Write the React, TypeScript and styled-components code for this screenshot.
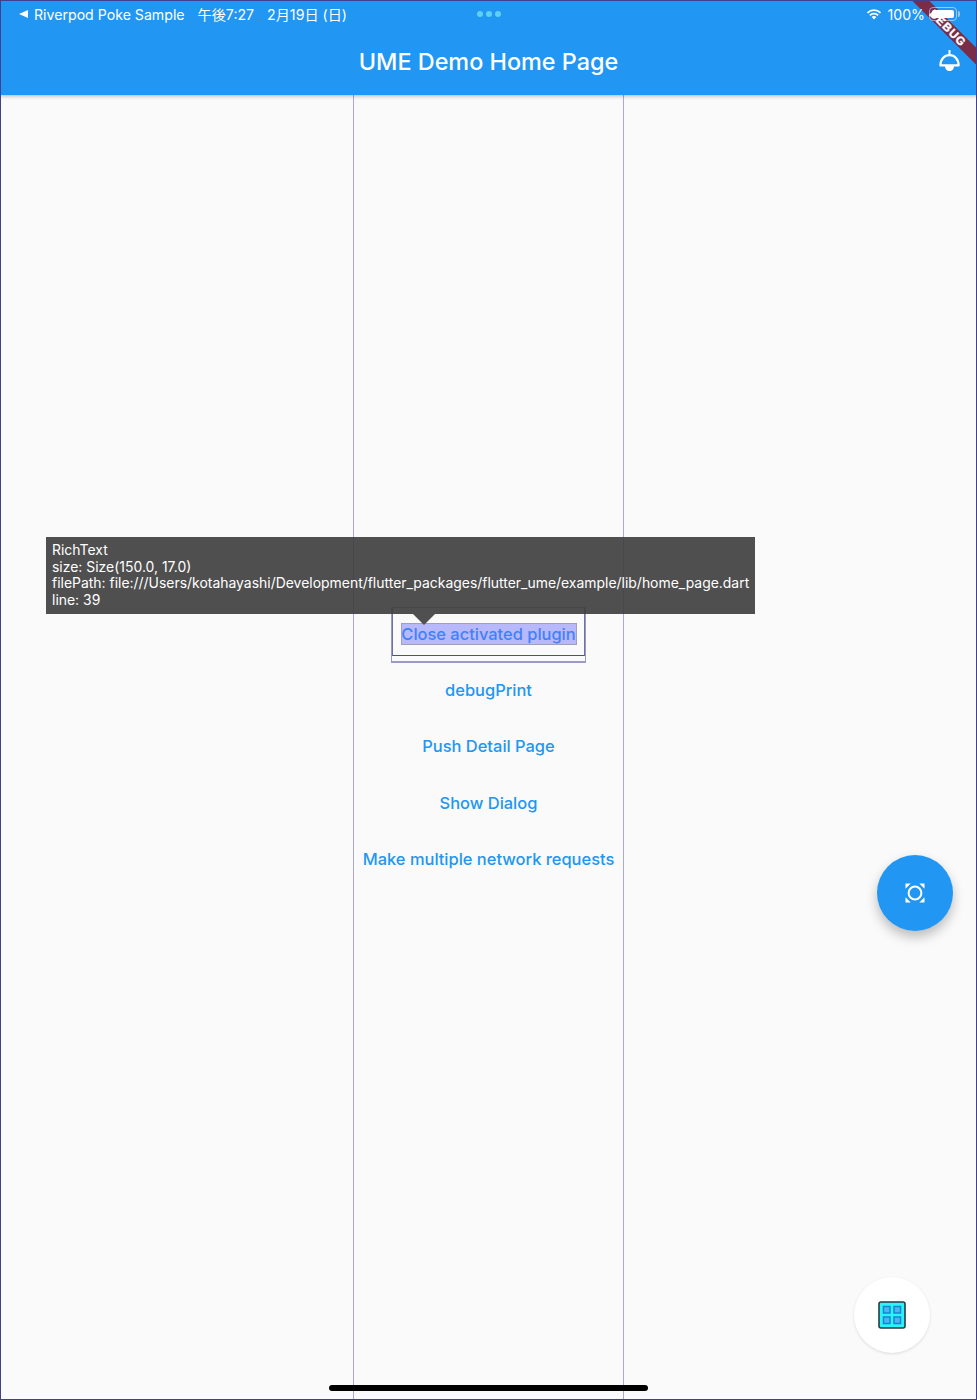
import React from 'react'
import styled, { createGlobalStyle } from 'styled-components'

const GlobalStyle = createGlobalStyle`
  html, body {
    margin: 0;
    padding: 0;
    background: #fafafa;
  }
`

const buttons = ['Close activated plugin', 'debugPrint', 'Push Detail Page', 'Show Dialog', 'Make multiple network requests']

const App: React.FC = () => {
  return (
    <Screen>
      <GlobalStyle />
      <AppBar>
        <DebugBanner>
          <DebugLabel>DEBUG</DebugLabel>
        </DebugBanner>
        <StatusBar>
          <StatusLeft>
            <BackArrow />
            <span>Riverpod Poke Sample</span>
            <StatusTime>午後7:27</StatusTime>
            <span>2月19日 (日)</span>
          </StatusLeft>
          <MultitaskDots>
            <i />
            <i />
            <i />
          </MultitaskDots>
          <StatusRight>
            <svg width="16" height="12" viewBox="0 0 16 12">
              <path d="M8 11.6 5.6 9.1a3.4 3.4 0 0 1 4.8 0z" fill="#fff" />
              <path d="M3.9 7.4a5.8 5.8 0 0 1 8.2 0" stroke="#fff" strokeWidth="1.7" fill="none" />
              <path d="M1.5 4.9a9.2 9.2 0 0 1 13 0" stroke="#fff" strokeWidth="1.7" fill="none" />
            </svg>
            <BatteryLevel>100%</BatteryLevel>
            <Battery>
              <BatteryFill />
              <BatteryNub />
            </Battery>
          </StatusRight>
        </StatusBar>
        <TitleRow>
          <Title>UME Demo Home Page</Title>
          <LampButton>
            <svg width="21" height="21" viewBox="0 0 21 21">
              <rect x="9.5" y="0" width="2" height="5" fill="#fff" />
              <path d="M1.4 15.4c0-6 4-10.2 9.1-10.2s9.1 4.2 9.1 10.2z" fill="none" stroke="#fff" strokeWidth="2.2" strokeLinejoin="round" />
              <path d="M6 16h9c0 3-2 5-4.5 5S6 19 6 16z" fill="#fff" />
            </svg>
          </LampButton>
        </TitleRow>
      </AppBar>
      <Body>
        <ButtonColumn>
          {buttons.map(label => (
            <TextButton key={label}>{label}</TextButton>
          ))}
        </ButtonColumn>
      </Body>

      <SelectedParent />
      <SelectedRow />
      <SelectedText />
      <InfoCard>
        RichText
        <br />
        size: Size(150.0, 17.0)
        <br />
        filePath: file:///Users/kotahayashi/Development/flutter_packages/flutter_ume/example/lib/home_page.dart
        <br />
        line: 39
      </InfoCard>
      <InfoArrow />

      <ScanFab>
        <svg width="20" height="20" viewBox="0 0 20 20">
          <circle cx="10" cy="10" r="6.4" fill="none" stroke="#fff" strokeWidth="2" />
          <path d="M0.5 0.5h5.2L0.5 5.7zM19.5 0.5h-5.2l5.2 5.2zM0.5 19.5h5.2L0.5 14.3zM19.5 19.5h-5.2l5.2-5.2z" fill="#fff" />
        </svg>
      </ScanFab>
      <DockFab>
        <svg width="28" height="28" viewBox="0 0 28 28">
          <rect x="1" y="1" width="26" height="26" rx="2" fill="#29f3fb" stroke="#2c3a40" strokeWidth="1.6" />
          <rect x="5.5" y="5.5" width="6.5" height="6.5" fill="#4db4f2" stroke="#1785cf" strokeWidth="1.5" />
          <rect x="16" y="5.5" width="6.5" height="6.5" fill="#4db4f2" stroke="#1785cf" strokeWidth="1.5" />
          <rect x="5.5" y="16" width="6.5" height="6.5" fill="#4db4f2" stroke="#1785cf" strokeWidth="1.5" />
          <rect x="16" y="16" width="6.5" height="6.5" fill="#4db4f2" stroke="#1785cf" strokeWidth="1.5" />
        </svg>
      </DockFab>

      <HomeIndicator />
      <ScreenFrame />
    </Screen>
  )
}

export default App

const Screen = styled.div`
  position: relative;
  display: flex;
  flex-direction: column;
  width: 977px;
  height: 1400px;
  overflow: hidden;
  background: #fafafa;
  font-family: Inter, 'Noto Sans CJK JP', sans-serif;
`

const ScreenFrame = styled.div`
  position: absolute;
  inset: 0;
  z-index: 3;
  border: 1px solid #40408f;
  pointer-events: none;
`

const AppBar = styled.header`
  position: relative;
  flex: none;
  display: flex;
  flex-direction: column;
  height: 95px;
  box-sizing: border-box;
  background: #2196f3;
  color: #ffffff;
  box-shadow: 0 1px 4px rgba(0, 0, 0, 0.3);
  z-index: 1;
`

const DebugBanner = styled.div`
  position: absolute;
  left: 887.5px;
  top: 22px;
  width: 120px;
  height: 12px;
  display: flex;
  align-items: center;
  justify-content: center;
  transform: rotate(45deg);
  background: rgba(160, 0, 0, 0.7);
`

const DebugLabel = styled.span`
  color: #ffffff;
  font-family: 'Liberation Sans', sans-serif;
  font-size: 11.5px;
  font-weight: 700;
  letter-spacing: 1px;
  -webkit-text-stroke: 0.4px #ffffff;
`

const StatusBar = styled.div`
  position: relative;
  z-index: 2;
  display: flex;
  align-items: center;
  justify-content: space-between;
  height: 28px;
  padding: 0 20px 0 19px;
  font-size: 14.15px;
`

const StatusLeft = styled.div`
  display: flex;
  align-items: center;
  white-space: nowrap;
`

const BackArrow = styled.span`
  width: 0;
  height: 0;
  margin-right: 6px;
  border-top: 4.5px solid transparent;
  border-bottom: 4.5px solid transparent;
  border-right: 9px solid #ffffff;
`

const StatusTime = styled.span`
  margin: 0 13px;
`

const MultitaskDots = styled.div`
  position: absolute;
  left: 477px;
  top: 11px;
  display: flex;
  gap: 3px;

  i {
    width: 6px;
    height: 6px;
    border-radius: 50%;
    background: #5fd0f5;
  }
`

const StatusRight = styled.div`
  display: flex;
  align-items: center;
`

const BatteryLevel = styled.span`
  margin: 0 4px 0 6px;
`

const Battery = styled.div`
  position: relative;
  width: 28px;
  height: 14px;
  box-sizing: border-box;
  padding: 2px;
  border: 1px solid rgba(255, 255, 255, 0.5);
  border-radius: 4px;
`

const BatteryFill = styled.div`
  width: 100%;
  height: 100%;
  background: #ffffff;
  border-radius: 2px;
`

const BatteryNub = styled.div`
  position: absolute;
  right: -4px;
  top: 3px;
  width: 2px;
  height: 6px;
  border-radius: 0 2px 2px 0;
  background: rgba(255, 255, 255, 0.5);
`

const TitleRow = styled.div`
  position: relative;
  flex: 1;
  display: flex;
  align-items: center;
  justify-content: center;
  padding-bottom: 1px;
`

const Title = styled.h1`
  margin: 0;
  font-size: 23.4px;
  font-weight: 500;
`

const LampButton = styled.div`
  position: absolute;
  right: 17px;
  top: 22px;
  line-height: 0;
`

const Body = styled.main`
  flex: 1;
  display: flex;
  justify-content: center;
`

const ButtonColumn = styled.div`
  display: flex;
  flex-direction: column;
  justify-content: center;
  align-items: center;
  box-sizing: border-box;
  width: 271px;
  border-left: 1px solid #a9a9d6;
  border-right: 1px solid #a9a9d6;
  padding-bottom: 2px;
`

const TextButton = styled.div`
  display: flex;
  align-items: center;
  height: 56.3px;
  color: #2196f3;
  font-size: 16.45px;
  font-weight: 500;
  white-space: nowrap;
`

const SelectedParent = styled.div`
  position: absolute;
  left: 391px;
  top: 607px;
  width: 193px;
  height: 53px;
  border: 1px solid #9a9ac4;
  border-bottom-width: 2px;
`

const SelectedRow = styled.div`
  position: absolute;
  left: 392px;
  top: 608px;
  width: 193px;
  height: 48px;
  box-sizing: border-box;
  border: 1px solid #6f6faa;
  border-top: none;
  border-bottom-color: #4d4d96;
`

const SelectedText = styled.div`
  position: absolute;
  left: 401px;
  top: 623px;
  width: 174px;
  height: 20px;
  background: rgba(104, 104, 255, 0.45);
  border: 1px solid #a0a0b8;
`

const InfoCard = styled.div`
  position: absolute;
  left: 46px;
  top: 537px;
  width: 709px;
  height: 77px;
  box-sizing: border-box;
  padding: 5px 6px;
  background: rgba(64, 64, 64, 0.92);
  color: #ffffff;
  font-size: 13.94px;
  line-height: 16.5px;
  white-space: nowrap;
`

const InfoArrow = styled.div`
  position: absolute;
  left: 413px;
  top: 614px;
  width: 0;
  height: 0;
  border-left: 11px solid transparent;
  border-right: 11px solid transparent;
  border-top: 11px solid #505050;
`

const ScanFab = styled.div`
  position: absolute;
  left: 877px;
  top: 855px;
  width: 76px;
  height: 76px;
  display: flex;
  align-items: center;
  justify-content: center;
  border-radius: 50%;
  background: #2196f3;
  box-shadow: 0 6px 12px rgba(0, 0, 0, 0.25);
`

const DockFab = styled.div`
  position: absolute;
  left: 854px;
  top: 1277px;
  width: 76px;
  height: 76px;
  display: flex;
  align-items: center;
  justify-content: center;
  border-radius: 50%;
  background: #ffffff;
  box-shadow: 0 1px 3px rgba(0, 0, 0, 0.12);
`

const HomeIndicator = styled.div`
  position: absolute;
  left: 329px;
  bottom: 9px;
  width: 319px;
  height: 6px;
  border-radius: 3px;
  background: #000000;
`
